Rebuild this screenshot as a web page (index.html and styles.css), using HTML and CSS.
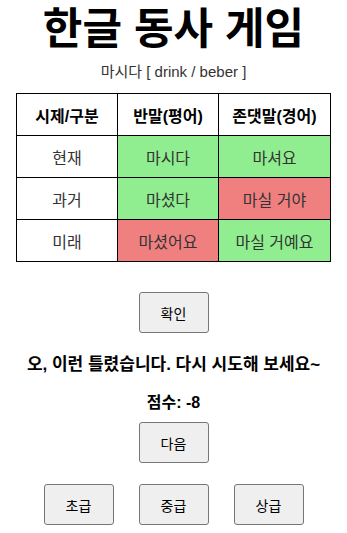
FILE: index.html
```html
<!DOCTYPE html>
<html lang="ko">
<head>
    <meta charset="UTF-8">
    <meta name="viewport" content="width=device-width, initial-scale=1.0">
    <title>한글 동사 게임</title>
    <link rel="stylesheet" href="styles.css">
</head>
<body>
    <h1 class="title">한글 동사 게임</h1>
    <p class="verb">마시다 [ drink / beber ]</p>

    <table class="conj">
        <tr>
            <th>시제/구분</th>
            <th>반말(평어)</th>
            <th>존댓말(경어)</th>
        </tr>
        <tr>
            <td>현재</td>
            <td class="right">마시다</td>
            <td class="right">마셔요</td>
        </tr>
        <tr>
            <td>과거</td>
            <td class="right">마셨다</td>
            <td class="wrong">마실 거야</td>
        </tr>
        <tr>
            <td>미래</td>
            <td class="wrong">마셨어요</td>
            <td class="right">마실 거예요</td>
        </tr>
    </table>

    <button class="btn check">확인</button>

    <p class="result">오, 이런 틀렸습니다. 다시 시도해 보세요~</p>
    <p class="score">점수: -8</p>

    <button class="btn">다음</button>

    <div class="levels">
        <button class="btn">초급</button>
        <button class="btn">중급</button>
        <button class="btn">상급</button>
    </div>
</body>
</html>
```

FILE: styles.css
```css
body {
    font-family: "Liberation Sans", "Noto Sans CJK KR", sans-serif;
    margin: 0;
    padding: 0;
    background-color: #fff;
    color: #000;
    display: flex;
    flex-direction: column;
    align-items: center;
    text-align: center;
}

.title {
    font-size: 43px;
    font-weight: bold;
    margin: 4px 0 0;
    line-height: 50px;
}

.verb {
    font-size: 15px;
    color: #333;
    margin: 9px 0 0;
    line-height: 18px;
}

.conj {
    border-collapse: collapse;
    margin-top: 12px;
    width: 315px;
}

.conj th, .conj td {
    border: 1px solid #000;
    height: 41px;
    padding: 0;
    font-size: 16px;
}

.conj th {
    font-weight: bold;
}

.conj th:nth-child(1) { width: 100px; }
.conj th:nth-child(2) { width: 100px; }

.conj td {
    color: #333;
}

.right {
    background-color: #90ee90;
}

.wrong {
    background-color: #f08080;
}

.btn {
    width: 70px;
    height: 41px;
    font-family: inherit;
    font-size: 14px;
    color: #000;
    background-color: #efefef;
    border: 1px solid #767676;
    border-radius: 3px;
    padding: 0;
}

.check {
    margin-top: 30px;
}

.result {
    font-size: 17px;
    font-weight: bold;
    margin: 22px 0 0;
    line-height: 20px;
}

.score {
    font-size: 16px;
    font-weight: bold;
    margin: 18px 0 9px;
    line-height: 20px;
}

.levels {
    display: flex;
    gap: 25px;
    margin-top: 21px;
}
```
